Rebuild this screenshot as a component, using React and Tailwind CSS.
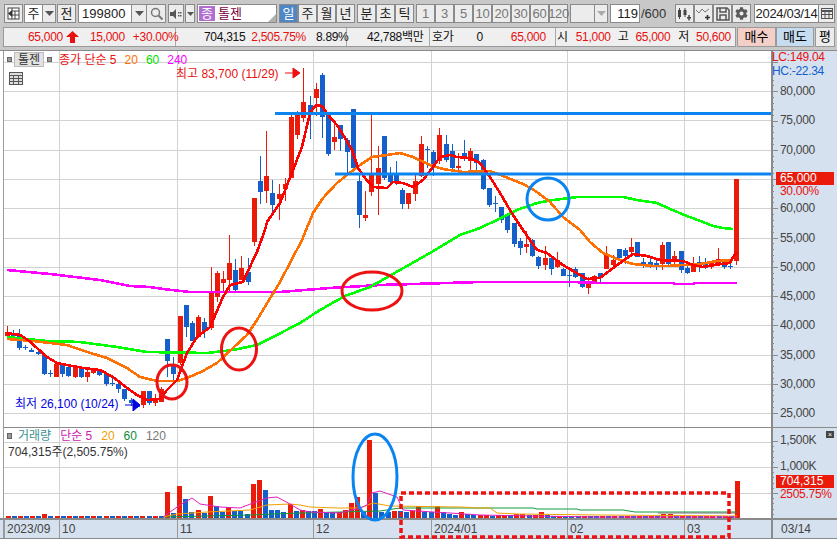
import React from 'react';
import { FaCog } from 'react-icons/fa';

// [x, color, wickTop, bodyTop, bodyBottom, wickBottom] in page pixels
const CANDLES = [
  [7,'r',326,332,336,337],[13,'b',330,333,336,338],[19,'b',329,336,348,350],[25,'b',345,347,348,350],[31,'b',348,350,352,352],
  [38,'b',350,352,354,355],[44,'b',354,355,374,375],[50,'b',370,373,374,377],[56,'r',363,364,377,377],[62,'b',363,364,374,377],
  [68,'b',366,367,376,377],[75,'r',368,368,377,378],[81,'b',367,369,377,378],[87,'r',370,372,377,382],[93,'r',368,370,373,374],
  [99,'b',370,371,375,376],[106,'b',373,374,384,386],[112,'b',376,383,384,386],[118,'b',380,384,389,393],[124,'b',389,389,399,401],
  [131,'b',398,400,403,406],[137,'b',403,404,407,408],[143,'r',391,391,405,408],[149,'b',391,391,403,405],[155,'r',394,399,403,406],
  [161,'r',387,389,402,402],[167,'b',339,339,361,377],[173,'b',357,365,374,383],[180,'r',316,316,363,365],[186,'b',305,305,327,337],
  [192,'b',321,323,341,341],[198,'r',315,317,337,338],[204,'b',318,322,331,338],[211,'r',267,291,328,330],[217,'r',271,273,297,302],
  [223,'r',271,279,283,292],[229,'r',235,263,280,292],[235,'b',259,270,290,292],[241,'r',256,268,280,280],[248,'b',258,272,282,285],
  [254,'r',198,198,242,246],[260,'b',156,181,192,204],[266,'r',131,176,191,203],[272,'b',180,193,205,215],[279,'r',184,194,199,220],
  [285,'r',178,184,189,201],[291,'r',113,117,178,178],[297,'r',111,112,135,139],[303,'r',68,102,118,122],[310,'b',96,105,113,139],
  [316,'r',83,89,98,116],[322,'b',73,75,117,138],[328,'b',115,115,154,156],[334,'r',122,137,142,150],[340,'b',125,125,139,151],
  [347,'b',138,140,152,173],[353,'b',109,109,168,168],[359,'b',175,181,215,228],[365,'r',191,215,218,221],[371,'r',112,174,192,196],
  [378,'r',146,168,184,215],[384,'b',136,136,178,180],[390,'b',167,175,182,185],[396,'b',161,175,182,185],[402,'b',188,190,204,209],
  [408,'r',193,193,204,209],[415,'r',174,181,194,201],[421,'r',136,144,176,177],[427,'b',146,149,150,168],[433,'b',150,152,164,176],
  [439,'r',128,135,161,164],[446,'b',135,144,160,162],[452,'b',144,151,168,171],[458,'r',153,166,168,173],[464,'b',140,153,158,161],
  [470,'r',148,151,161,172],[476,'b',154,154,163,170],[483,'b',159,160,189,190],[489,'b',188,188,205,207],[495,'b',196,203,204,212],
  [501,'b',207,207,220,223],[507,'b',214,214,230,233],[514,'b',223,223,244,247],[520,'b',238,241,248,255],[526,'r',231,244,247,253],
  [532,'b',239,240,256,257],[538,'b',256,257,266,269],[545,'r',246,258,265,270],[551,'b',257,258,269,275],[557,'r',252,260,267,268],
  [563,'b',268,269,276,276],[569,'b',267,275,276,287],[575,'b',267,269,277,278],[582,'b',273,273,287,288],[588,'r',277,283,288,294],
  [594,'r',275,276,282,284],[600,'b',273,273,277,284],[606,'r',246,254,269,269],[613,'r',255,260,265,269],[619,'b',249,249,258,260],
  [625,'b',248,250,256,264],[631,'r',238,247,252,256],[637,'b',242,242,257,257],[643,'b',258,262,265,268],[650,'b',257,262,265,268],
  [656,'b',258,263,267,270],[662,'r',242,245,264,270],[668,'b',242,242,264,267],[674,'r',251,256,262,267],[681,'b',251,251,270,273],
  [687,'b',266,268,273,274],[693,'r',257,265,272,272],[699,'b',256,262,263,272],[705,'b',258,262,268,269],[711,'r',262,262,267,269],
  [718,'r',248,259,265,266],[724,'b',260,261,267,269],[730,'b',261,266,267,269],[736,'r',179,179,261,265],
];

// color + height, same order as the candles
const VOLUMES = ('r2 b2 r2 b2 r2 b2 r4 b2 r2 b2 r2 b2 r2 b2 r2 b2 r2 b2 r2 b2 r2 b2 r2 b2 r2 b2 ' +
  'r26 b5 r32 b19 b6 r8 b5 r22 b12 b6 r11 b7 b7 b4 r34 r38 b28 b8 b8 b6 r14 b7 r8 b7 b7 r9 b6 b6 r6 r8 r15 r21 b6 r78 b25 b6 b6 r7 b7 b6 r7 r12 b6 b6 r12 b6 b4 b3 r6 b4 b3 r3 r3 b2 r3 r3 b3 r4 r4 b3 r3 r6 b3 b2 r2 b2 b2 b2 r2 b2 b2 ' +
  'r2 b2 r2 b2 r2 b2 r2 b2 r2 b2 r4 r4 b2 r2 b2 r2 b2 r2 r2 b2 r2 b2 r37').split(' ');

const MA5 = '7,333 20,335 28,340 37,348 47,357 57,363 67,365 83,368 100,370 113,377 127,388 137,395 147,400 160,399 167,390 177,380 187,353 197,337 210,327 223,297 230,285 243,282 247,273 257,252 265,230 267,222 280,203 293,170 302,147 310,113 316,105 322,106 328,115 337,125 345,138 352,150 358,168 365,178 373,187 387,188 393,182 403,183 413,187 423,180 433,167 440,157 450,155 457,157 470,158 480,163 490,177 500,193 513,215 523,230 537,250 547,253 563,265 580,275 587,279 600,278 613,268 627,258 633,254 647,256 660,260 683,261 693,265 703,267 713,265 730,263 733,257 737,252';
const MA20 = '7,339 33,341 50,343 67,345 87,352 107,358 127,368 140,377 157,381 177,381 187,378 203,371 217,363 233,348 247,335 257,320 263,310 280,282 302,240 313,213 323,198 337,183 347,175 360,165 372,157 387,155 400,153 413,157 430,165 443,169 463,172 490,171 503,176 523,184 537,192 550,202 563,217 580,230 590,242 603,253 620,260 633,264 653,266 667,266 700,264 717,261 733,260';
const MA60 = '7,337 47,341 80,342 117,347 147,352 207,353 233,350 257,345 273,337 300,323 320,310 345,296 370,287 400,270 430,253 460,235 480,228 497,220 517,210 537,203 553,200 570,198 577,197 623,197 637,200 657,203 670,209 687,216 703,222 713,226 723,228 733,229';
const MA240 = '7,270 50,274 100,280 130,286 150,287 163,289 190,292 260,292 280,292 330,288 380,285 480,282 527,282 573,282 600,283 673,283 675,284 693,284 695,283 737,283';
const VMA5 = '163,517 170,512 180,505 192,498 200,504 220,507 240,508 253,503 267,498 277,497 290,504 300,510 310,512 340,513 360,508 367,505 372,493 380,491 397,497 403,510 433,512 450,513 480,515 533,516 600,517 737,517';
const VMA20 = '163,517 177,514 207,512 250,510 267,505 290,504 300,505 310,507 337,508 360,508 373,503 390,506 460,507 480,508 490,508 497,513 517,514 600,515 737,516';
const VMA60 = '163,517 250,515 300,513 380,511 400,508 533,508 537,509 577,509 580,510 623,510 635,512 737,512';
const VMA120 = '658,513 735,513';

const PRICE_LINES = [62, 91, 120, 150, 179, 208, 238, 267, 296, 325, 355, 384, 413];
const PRICE_LABELS = ['80,000', '75,000', '70,000', null, '60,000', '55,000', '50,000', '45,000', '40,000', '35,000', '30,000', '25,000'];
const VERT_LINES = [59, 177, 313, 431, 567, 684];
const TIME_LABELS = [['2023/09', 0], ['10', 55], ['11', 173], ['12', 309], ['2024/01', 427], ['02', 563], ['03', 680]];
const FONT = 'font-["Liberation_Sans","Noto_Sans_CJK_KR",sans-serif]';

const Btn = ({ w, children, className = '' }) => (
  <div className={`h-[19px] shrink-0 flex items-center justify-center border border-[#8a8a8a] bg-[#ececec] text-[13px] text-[#222] ${w} ${className}`}>
    {children}
  </div>
);

const Caret = ({ color = '#555' }) => (
  <svg width="9" height="5" viewBox="0 0 9 5"><path d="M0 0h9L4.500 5z" fill={color} /></svg>
);

const ToolBar = () => (
  <div className="h-[27px] pl-1 pt-1 flex items-start bg-[#c8c8c8]">
    <Btn w="w-[19px]">
      <svg width="13" height="13" viewBox="0 0 13 13"><rect x="1" y="1" width="11" height="11" fill="#fff" stroke="#444" /><path d="M5 1v11M8 4v8M5 4h7M5 8h7" stroke="#444" /><path d="M5 3L1 6.500L5 10z" fill="#333" /></svg>
    </Btn>
    <Btn w="w-[19px] ml-px" className="bg-white">주</Btn>
    <Btn w="w-[13px]" className="border-l-0"><Caret /></Btn>
    <Btn w="w-[19px] ml-px">전</Btn>
    <Btn w="w-[54px] ml-[2px]" className="bg-white !justify-start pl-[3px]">199800</Btn>
    <Btn w="w-[15px]" className="border-l-0"><Caret /></Btn>
    <Btn w="w-[19px]" className="border-l-0">
      <svg width="13" height="13" viewBox="0 0 13 13" fill="none" stroke="#777" strokeWidth="1.500"><circle cx="5.500" cy="5.500" r="4" /><path d="M8.500 8.500L12.500 12.500" strokeWidth="2" /></svg>
    </Btn>
    <Btn w="w-[16px] ml-[2px]">
      <svg width="12" height="12" viewBox="0 0 12 12" fill="#555"><path d="M0 4h3l3-3v10L3 8H0z" /><rect x="8" y="4" width="1.500" height="1.500" /><rect x="8" y="7" width="1.500" height="1.500" /><rect x="10" y="4" width="1.500" height="1.500" /><rect x="10" y="7" width="1.500" height="1.500" /></svg>
    </Btn>
    <Btn w="w-[10px] ml-px"><svg width="7" height="4" viewBox="0 0 7 4"><path d="M0 0h7L3.500 4z" fill="#555" /></svg></Btn>
    <div className="relative ml-[2px] w-[80px] h-[19px] shrink-0 flex items-center border border-[#8a8a8a] bg-white text-[13px]">
      <span className="ml-px w-4 h-[15px] flex items-center justify-center bg-[#b06ed0] text-white leading-none">종</span>
      <span className="ml-[3px] text-[#7a0040]">톨젠</span>
      <span className="absolute right-0 bottom-0 w-0 h-0 border-l-[8px] border-l-transparent border-b-[8px] border-b-[#b0b0b0]" />
    </div>
    <Btn w="w-[19px] ml-[2px]" className="!bg-[#4f87c6] !text-white">일</Btn>
    <Btn w="w-[19px]">주</Btn>
    <Btn w="w-[19px]">월</Btn>
    <Btn w="w-[19px]">년</Btn>
    <Btn w="w-[19px] ml-[2px]">분</Btn>
    <Btn w="w-[19px]">초</Btn>
    <Btn w="w-[19px]">틱</Btn>
    <div className="ml-[2px] flex">
      {['1', '3', '5', '10', '20', '30', '60', '120'].map((n) => (
        <Btn key={n} w="w-[19px]" className="text-[11px] !text-[#777] tracking-tight">{n}</Btn>
      ))}
    </div>
    <Btn w="w-[25px] ml-[2px]" />
    <Btn w="w-[13px]" className="border-l-0"><Caret color="#aaa" /></Btn>
    <Btn w="w-[30px] ml-[2px]" className="bg-white !justify-end pr-px">119</Btn>
    <span className="ml-px w-[34px] h-[19px] shrink-0 leading-[19px] text-[13px] text-[#333]">/600</span>
    <Btn w="w-[19px]">
      <svg width="15" height="14" viewBox="0 0 15 14" fill="#444"><rect x="1" y="3" width="3" height="7" /><path d="M2.500 1v11M8 1v9" stroke="#444" /><rect x="6.500" y="3" width="3" height="5" /><path d="M10 10h4v1.500h-4zM11.300 8h1.500v5.500h-1.500z" /></svg>
    </Btn>
    <Btn w="w-[19px]">
      <svg width="15" height="14" viewBox="0 0 15 14" fill="none" stroke="#777"><path d="M0 3l3 3 3-4 3 3 4-3" /><path d="M9 10.500h5M11.500 8v5" stroke="#333" strokeWidth="1.500" /></svg>
    </Btn>
    <Btn w="w-[19px]">
      <svg width="14" height="14" viewBox="0 0 14 14" fill="none" stroke="#555" strokeWidth="1.500"><path d="M1 1h10l2 2v10H1z" /><path d="M4 1v4h6V1M4 13V8h6v5" /></svg>
    </Btn>
    <Btn w="w-[19px]"><FaCog className="text-[#5a5a5a] text-[13px]" /></Btn>
    <Btn w="w-[65px] ml-[3px]" className="bg-white text-[12px] tracking-tight">2024/03/14</Btn>
    <Btn w="w-[16px]" className="border-l-0">
      <svg width="12" height="11" viewBox="0 0 12 11" fill="none" stroke="#555"><rect x="0.500" y="0.500" width="11" height="10" /><path d="M0 3h12" strokeWidth="2" /><path d="M4 3v8M8 3v8M0 6.500h12" /></svg>
    </Btn>
  </div>
);

const Cell = ({ w, children, className = '' }) => (
  <div className={`h-full shrink-0 flex items-center whitespace-nowrap tracking-tight border-r border-[#a8a8a8] ${w} ${className}`}>{children}</div>
);

const InfoBar = () => (
  <div className="h-[23px] pl-[3px] pb-[3px] flex bg-[#c8c8c8] text-[12px]">
    <div className="flex w-[733px] border border-[#9a9a9a] bg-[#efefef]">
      <Cell w="w-[172px]" className="text-[#e81010]">
        <span className="ml-[24px]">65,000</span>
        <svg className="ml-[3px] shrink-0" width="13" height="12" viewBox="0 0 13 12"><path d="M6.500 0L13 6H9v6H4V6H0z" fill="#e81010" /></svg>
        <span className="ml-[11px]">15,000</span>
        <span className="ml-[8px]">+30.00%</span>
      </Cell>
      <Cell w="w-[171px]" className="text-[#111]">
        <span className="ml-[28px]">704,315</span>
        <span className="ml-[6px] text-[#e81010]">2,505.75%</span>
        <span className="ml-[10px]">8.89%</span>
      </Cell>
      <Cell w="w-[83px]" className="text-[#111]"><span className="ml-[20px]">42,788백만</span></Cell>
      <Cell w="w-[126px]" className="text-[#111]">
        <span className="ml-[2px]">호가</span>
        <span className="ml-[23px]">0</span>
        <span className="ml-[28px] text-[#e81010]">65,000</span>
      </Cell>
      <div className="flex items-center whitespace-nowrap tracking-tight text-[#111]">
        <span className="ml-px">시</span>
        <span className="ml-[8px] text-[#e81010]">51,000</span>
        <span className="ml-[7px]">고</span>
        <span className="ml-[7px] text-[#e81010]">65,000</span>
        <span className="ml-[8px]">저</span>
        <span className="ml-[7px] text-[#e81010]">50,600</span>
      </div>
    </div>
    <div className="ml-px w-[39px] flex items-center justify-center border border-[#9a9a9a] bg-[#f4cfc8] text-[13px]">매수</div>
    <div className="w-[38px] flex items-center justify-center border border-[#9a9a9a] bg-[#c6dcf1] text-[13px]">매도</div>
    <div className="ml-px w-[20px] flex items-center justify-center border border-[#9a9a9a] bg-[#ececec] text-[13px]">평</div>
  </div>
);

const ChartDrawing = () => (
  <svg className="absolute inset-0" width="837" height="489" viewBox="0 50 837 489">
    <g stroke="#d2d2d2" shapeRendering="crispEdges">
      {PRICE_LINES.map((y) => <line key={y} x1="4" x2="771" y1={y + 0.5} y2={y + 0.5} />)}
      {[442, 467, 493].map((y) => <line key={y} x1="4" x2="771" y1={y + 0.5} y2={y + 0.5} />)}
      {VERT_LINES.map((x) => <line key={x} x1={x + 0.5} x2={x + 0.5} y1="51" y2="518" />)}
      <line x1="4" x2="771" y1="427.500" y2="427.500" stroke="#8a8a8a" />
    </g>

    {/* axis ticks */}
    <g stroke="#8a8a8a" shapeRendering="crispEdges">
      {Array.from({ length: 61 }, (_, i) => 62 + i * 5.85).map((y, i) => (
        <line key={i} x1="771" x2={i % 5 === 0 ? 778 : 774} y1={Math.round(y) + 0.5} y2={Math.round(y) + 0.5} />
      ))}
      {Array.from({ length: 16 }, (_, i) => 441 + i * 5.2).map((y, i) => (
        <line key={i} x1="771" x2={i % 5 === 0 ? 778 : 774} y1={Math.round(y) + 0.5} y2={Math.round(y) + 0.5} />
      ))}
    </g>

    {/* candles */}
    <g shapeRendering="crispEdges">
      {CANDLES.map(([x, c, wt, bt, bb, wb]) => {
        const fill = c === 'r' ? '#ea1b0b' : '#155fca';
        return (
          <g key={x} fill={fill}>
            <rect x={x} y={wt} width="1" height={wb - wt} />
            <rect x={x - 2} y={bt} width="5" height={Math.max(bb - bt, 1)} />
          </g>
        );
      })}
    </g>

    <g fill="none" strokeWidth="2.600" strokeLinejoin="round" shapeRendering="crispEdges">
      <polyline points={MA240} stroke="#ff00ff" />
      <polyline points={MA60} stroke="#00ff00" />
      <polyline points={MA20} stroke="#ff7000" />
      <polyline points={MA5} stroke="#ff0000" />
    </g>

    {/* volume */}
    <g shapeRendering="crispEdges">
      {VOLUMES.map((v, i) => {
        const h = Number(v.slice(1));
        const x = Math.round(737 - 6.13 * (VOLUMES.length - 1 - i));
        return <rect key={i} x={x - 2} y={518 - h} width="5" height={h} fill={v[0] === 'r' ? '#ea1b0b' : '#155fca'} />;
      })}
    </g>
    <g fill="none" strokeWidth="1">
      <polyline points={VMA60} stroke="#0f9a3c" />
      <polyline points={VMA120} stroke="#777777" />
      <polyline points={VMA20} stroke="#f0a000" />
      <polyline points={VMA5} stroke="#e020c0" />
    </g>

    {/* hand drawn marks */}
    <g fill="none" stroke="#0a84f0" strokeWidth="3">
      <line x1="275" x2="771" y1="113.500" y2="113.500" />
      <line x1="335" x2="771" y1="174" y2="174" />
      <ellipse cx="548" cy="199" rx="21" ry="21" />
      <ellipse cx="375" cy="477" rx="22" ry="43" />
    </g>
    <g fill="none" stroke="#ee1111" strokeWidth="3">
      <ellipse cx="172" cy="382" rx="15" ry="17" />
      <ellipse cx="239" cy="349" rx="17.500" ry="21" />
      <ellipse cx="372" cy="291" rx="30" ry="19" />
    </g>
    <rect x="401" y="493" width="328" height="44" fill="none" stroke="#ee1111" strokeWidth="3.500" strokeDasharray="5 3" />

    {/* arrows next to high and low */}
    <path d="M285 73h9M293 68l7 5-7 5z" stroke="#ee1111" fill="#ee1111" />
    <path d="M125 405h9M133 399l7 6-7 6z" stroke="#0000e0" fill="#0000e0" />
  </svg>
);

const Overlays = () => (
  <div className="absolute inset-0 text-[12px] leading-[14px] whitespace-nowrap">
    {/* price pane legend */}
    <div className="absolute left-[7px] top-[2px] flex items-center">
      <span className="w-[5px] h-[5px] bg-[#999] border border-[#666]" />
      <span className="ml-[2px] w-[30px] h-[15px] flex items-center justify-center bg-[#e2e2e2] border border-[#bbb] text-[#333]">톨젠</span>
      <span className="ml-[3px] w-[5px] h-[5px] bg-[#999] border border-[#666]" />
      <span className="ml-[7px] text-[#e81010]">종가 단순 5</span>
      <span className="ml-[8px] text-[#ff7000]">20</span>
      <span className="ml-[8px] text-[#00e000]">60</span>
      <span className="ml-[8px] text-[#ff00ff]">240</span>
    </div>
    <svg className="absolute left-[9px] top-[22px]" width="14" height="13" viewBox="0 0 14 13" fill="#ddd" stroke="#555">
      <rect x="0.500" y="0.500" width="13" height="12" />
      <path d="M0 3.500h14M0 6.500h14M0 9.500h14M4.500 3v10M9.500 3v10" strokeWidth="1" />
    </svg>
    <span className="absolute left-[176px] top-[17px] text-[#e81010]">최고 83,700 (11/29)</span>
    <span className="absolute left-[15px] top-[347px] text-[#0000e0]">최저 26,100 (10/24)</span>

    {/* volume pane legend */}
    <div className="absolute left-[7px] top-[379px] flex items-center">
      <span className="w-[5px] h-[6px] bg-[#999] border border-[#666]" />
      <span className="ml-[6px] text-[#3a9090]">거래량</span>
      <span className="ml-[9px] text-[#d020b0]">단순 5</span>
      <span className="ml-[9px] text-[#f0a000]">20</span>
      <span className="ml-[9px] text-[#0f8a3c]">60</span>
      <span className="ml-[9px] text-[#777]">120</span>
    </div>
    <span className="absolute left-[8px] top-[395px] text-[#333]">704,315주(2,505.75%)</span>

    {/* right axis */}
    <span className="absolute left-[772px] top-[1px] h-[12px] leading-[12px] text-[#e81010] tracking-tight">LC:149.04</span>
    <span className="absolute left-[772px] top-[15px] h-[12px] leading-[12px] text-[#0f5fd0] tracking-tight">HC:-22.34</span>
    {PRICE_LABELS.map((label, i) => label && (
      <span key={label} className="absolute left-[780px] text-[#444] tracking-tight" style={{ top: PRICE_LINES[i + 1] - 57 }}>{label}</span>
    ))}
    <span className="absolute left-[776px] top-[122px] w-[58px] h-[13px] pl-1 leading-[13px] bg-[#ea1b0b] text-white">65,000</span>
    <span className="absolute left-[780px] top-[135px] leading-[12px] text-[#e81010] tracking-tight">30.00%</span>
    <span className="absolute left-[780px] top-[383px] text-[#444] tracking-tight">1,500K</span>
    <span className="absolute left-[780px] top-[409px] text-[#444] tracking-tight">1,000K</span>
    <span className="absolute left-[776px] top-[425px] w-[58px] h-[13px] pl-1 leading-[13px] bg-[#ea1b0b] text-white">704,315</span>
    <span className="absolute left-[780px] top-[438px] leading-[12px] text-[#e81010] tracking-tight">2505.75%</span>
    <span className="absolute left-[826px] top-[381px] w-[8px] h-[7px] flex items-center justify-center bg-[#444] text-white text-[7px] leading-none">×</span>
  </div>
);

export default function App() {
  return (
    <div className={`w-[837px] h-[539px] overflow-hidden bg-white ${FONT}`}>
      <ToolBar />
      <InfoBar />
      <div className="relative h-[489px]">
        {/* panes */}
        <div className="h-[470px] flex border-t border-b-2 border-[#8a8a8a]">
          <div className="flex-1 ml-[3px] border-l border-[#9a9a9a]" />
          <div className="w-[66px] bg-[#d6e1ef] border-l-2 border-[#8a8a8a] flex flex-col">
            <div className="h-[377px] border-b border-[#8a8a8a]" />
          </div>
        </div>
        {/* time axis */}
        <div className="h-[19px] flex bg-[#d6e1ef] border-b border-[#8a8a8a] text-[12px] text-[#444] leading-[18px]">
          <div className="relative flex-1 ml-[3px] border-l border-[#9a9a9a]">
            {TIME_LABELS.map(([t, x]) => (
              <span key={t} className="absolute top-0 h-[18px] pl-[2px] border-l border-[#9a9a9a]" style={{ left: x }}>{t}</span>
            ))}
          </div>
          <div className="w-[66px] pl-[8px] border-l-2 border-[#8a8a8a]">03/14</div>
        </div>
        <ChartDrawing />
        <Overlays />
      </div>
    </div>
  );
}
